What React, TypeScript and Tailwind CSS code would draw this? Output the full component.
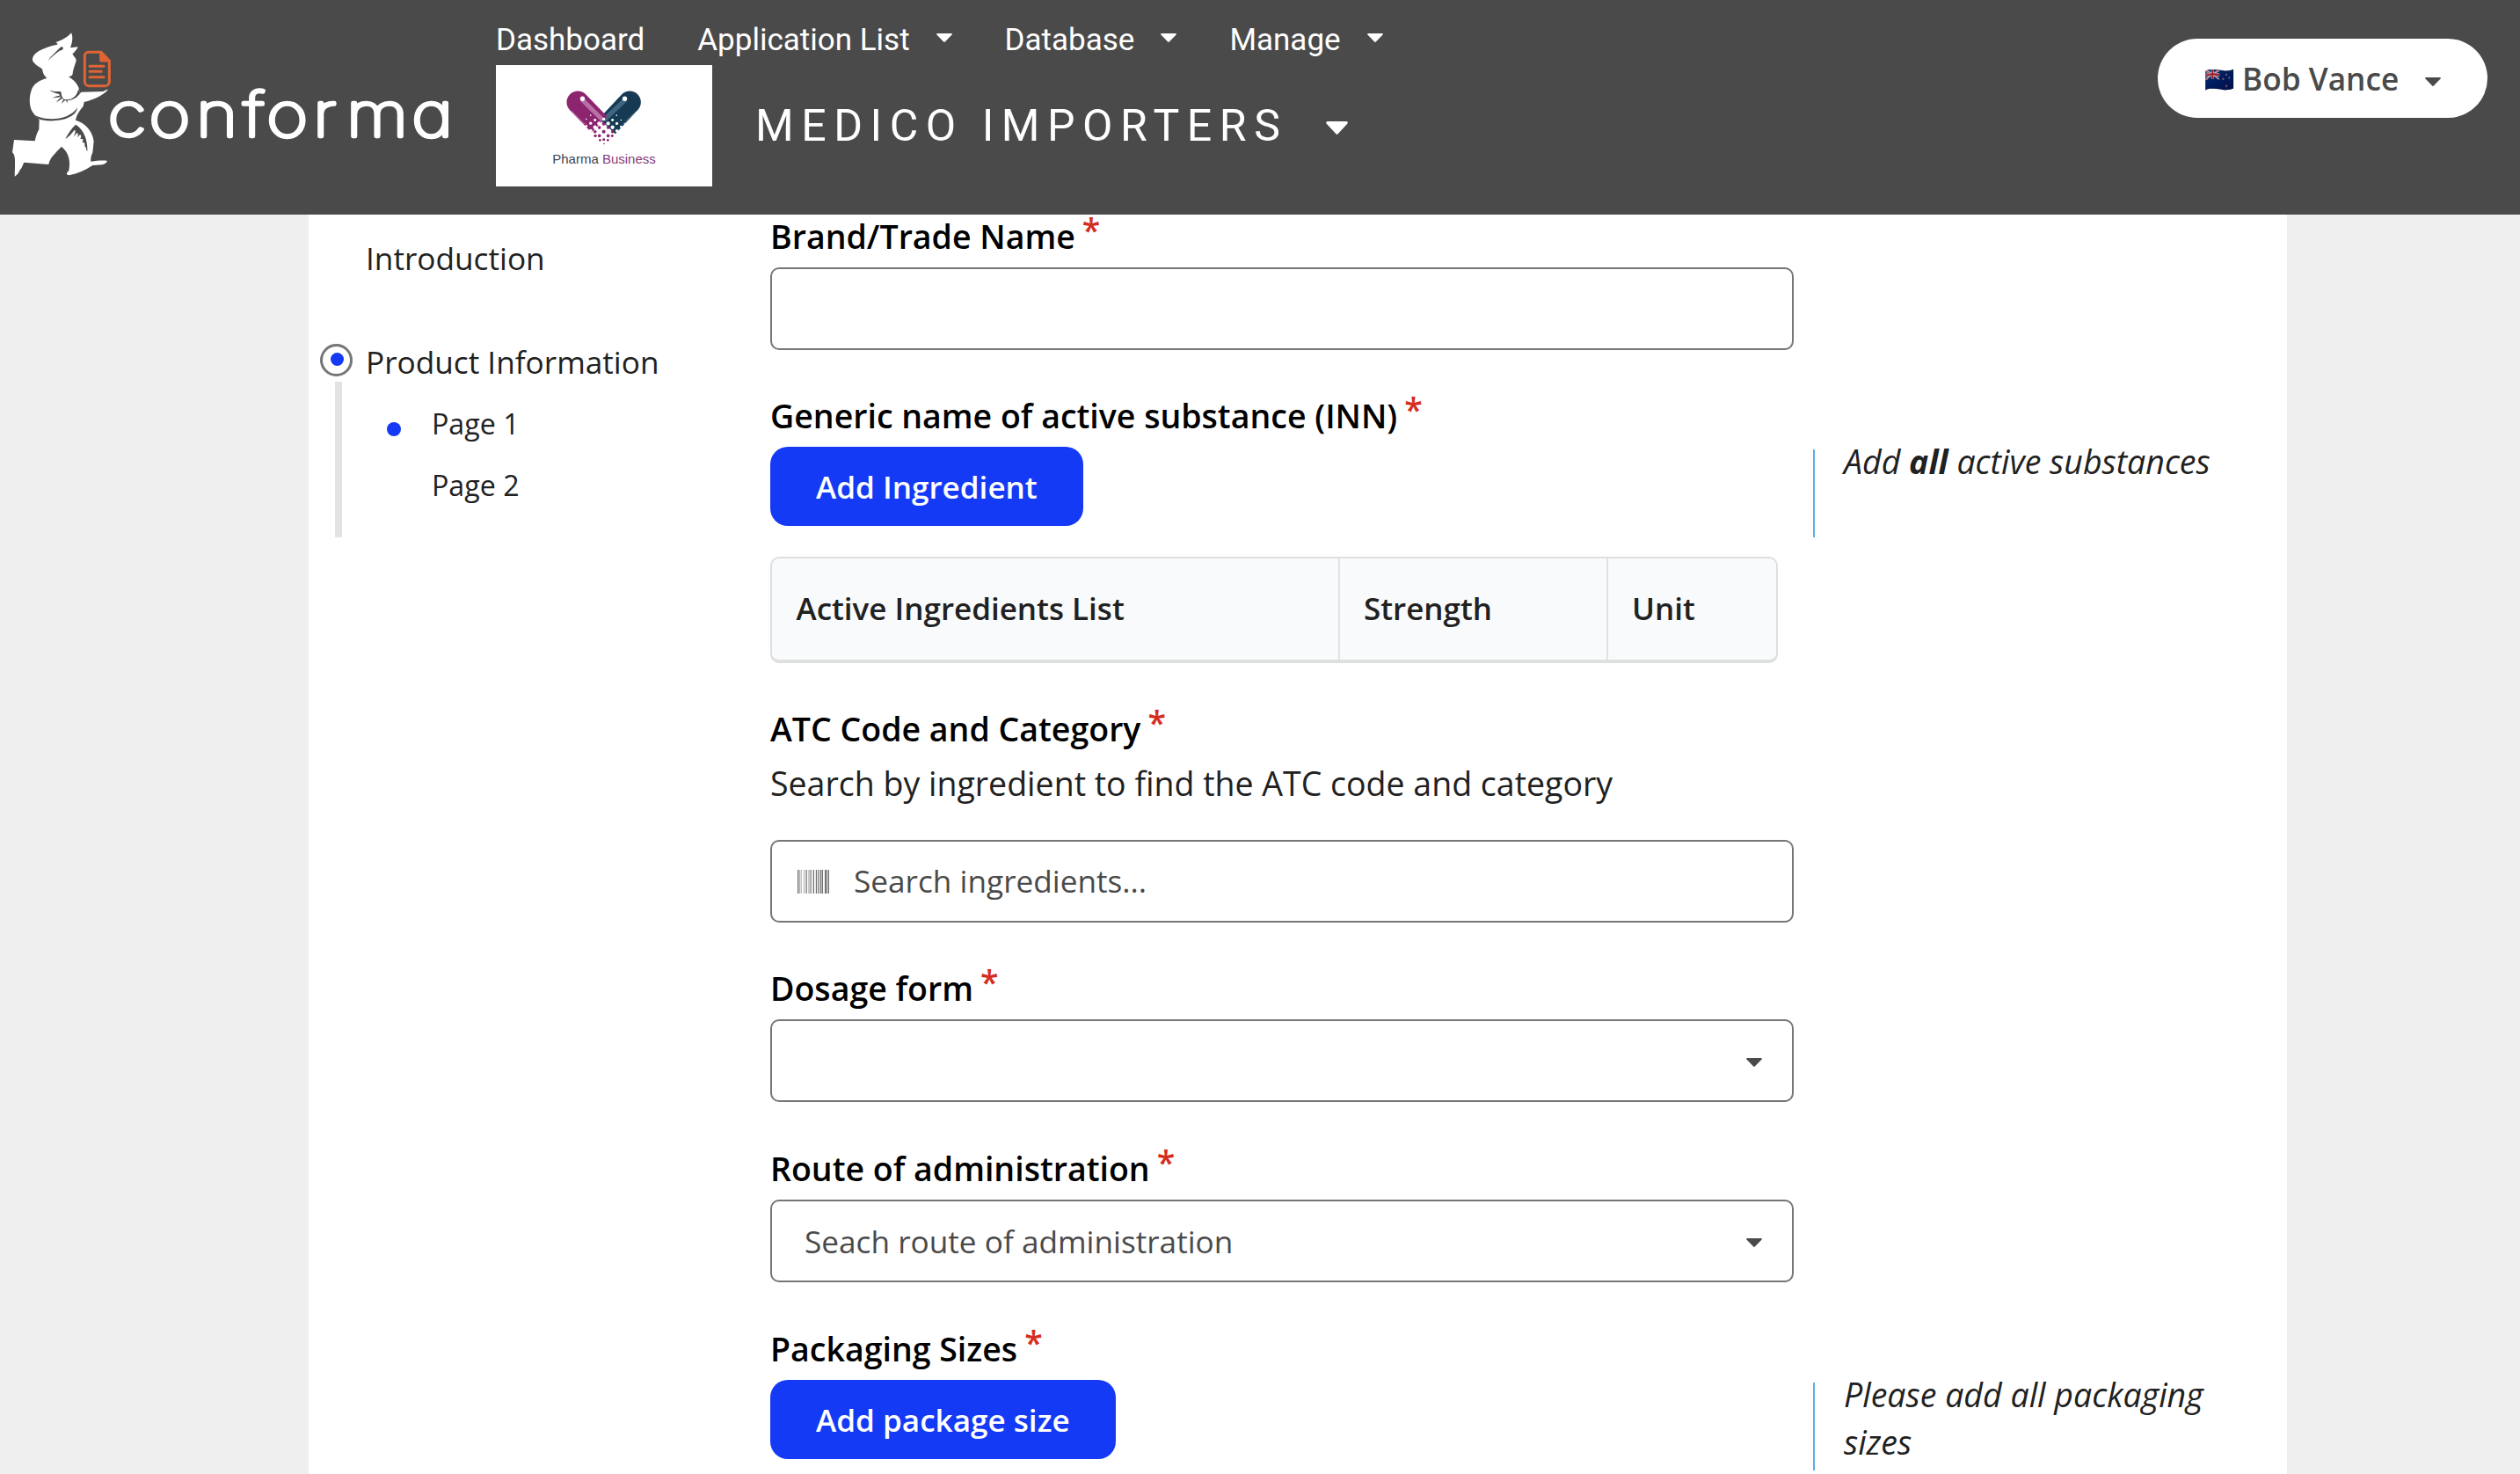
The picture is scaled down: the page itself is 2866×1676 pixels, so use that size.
import React from 'react';

function Caret({ className }: { className: string }) {
  return (
    <svg viewBox="0 0 18 10" className={className} fill="currentColor" preserveAspectRatio="none">
      <path d="M1.2 0H16.8c.9 0 1.4 1 .8 1.6L9.8 9.5c-.4.5-1.2.5-1.6 0L.4 1.6C-.2 1 .3 0 1.2 0z" />
    </svg>
  );
}

function RunnerLogo() {
  return (
    <svg viewBox="0 0 390 540" className="mt-[30px] ml-[10px] h-[180px] w-[130px] shrink-0">
      <path
        fill="#fff"
        d="M213 22C206 32 190 44 160 55C166 58 168 60 165 62C138 67 100 80 86 98C78 110 80 118 88 126C98 138 112 140 115 148C115 160 121 168 130 177C106 182 82 198 77 218C70 235 68 270 80 290C87 302 98 312 104 318L103 352C97 360 92 376 89 391L18 387L12 430C20 436 22 450 21 478L20 512C28 508 34 500 38 490C47 480 48 470 52 464L136 471C139 450 155 436 180 410C202 428 212 455 205 492C195 500 196 507 206 508C235 502 262 490 286 474L318 472C330 468 336 464 335 458C320 456 300 458 280 461C279 446 282 440 286 430L290 392C286 358 262 330 228 320C232 300 240 290 254 272L257 258C290 250 325 234 338 216C338 213 330 217 322 222L247 224L242 230L240 215C236 196 220 182 204 172C216 169 218 166 218 160C220 145 225 135 230 116C230 108 218 98 217 94C225 88 234 76 236 70L210 73C217 55 220 35 213 22Z"
      />
      <g fill="#4a4a4a">
        <path d="M133 117C145 100 165 84 178 70C184 68 188 74 184 78C180 84 176 80 172 84C158 94 146 106 133 117Z" />
        <path d="M138 217C155 225 166 221 178 223C180 233 180 243 190 249C180 247 173 240 172 231C160 228 148 225 138 217Z" />
        <path d="M145 244C156 242 166 236 174 236L176 241C166 243 156 244 145 244Z" />
        <path d="M162 259C166 252 172 246 179 242L183 246C176 250 170 254 162 259Z" />
        <path d="M180 264C182 258 184 252 188 248L192 252C187 256 184 260 180 264ZM202 262L194 251L199 250Z" />
        <path d="M188 248C212 256 232 240 238 214L243 228C236 240 218 256 190 252Z" />
        <path d="M88 303C130 324 205 322 234 277C228 325 130 330 100 314Z" />
        <path d="M193 383C203 366 212 350 228 335C256 350 270 390 268 426C262 420 266 412 260 410C258 404 262 400 256 396C250 398 250 392 254 388C252 382 247 386 244 382C250 374 246 372 243 369C238 374 236 378 234 378C238 368 236 362 232 364L222 376C226 364 230 354 224 354C216 362 206 378 193 383Z" />
      </g>
      <g fill="none" stroke="#e06433" strokeWidth="9" strokeLinecap="round" strokeLinejoin="round">
        <path d="M271 88H315L343 117V189a14 14 0 0 1-14 14H273a14 14 0 0 1-14-14V100a12 12 0 0 1 12-12Z" />
        <path d="M276 136H324M276 154H316M276 173H324" />
        <path fill="#e06433" d="M314 92V117H340Z" />
      </g>
    </svg>
  );
}

function Wordmark() {
  return (
    <svg
      viewBox="0 0 394 100"
      className="mt-[81px] -ml-[18px] h-[100px] w-[394px] shrink-0 overflow-visible font-['Inter',sans-serif] text-[68.5px] font-thin [font-feature-settings:'cv11']"
      fill="#fff"
      stroke="#fff"
      strokeWidth="4.4"
      strokeLinejoin="round"
    >
      <text x="0.6 40.3 85.7 131.1 153.7 198.4 230.5 293.5" y="74.3" transform="scale(1.18 1)">
        conforma
      </text>
    </svg>
  );
}

const WHITE_DOTS: [number, number, number][] = [
  [172, 134, 2.5], [187, 121, 2.5], [202, 137, 4.5], [187, 148, 5], [172, 158, 4], [216, 149, 6.5], [202, 162, 6.5],
  [187, 174, 6], [160, 150, 2], [232, 134, 5], [247, 149, 6.5], [262, 137, 4.5], [276, 121, 2.5], [262, 162, 6.5],
  [277, 149, 5], [291, 137, 2.5], [277, 174, 5.5], [291, 160, 4], [304, 150, 2.5], [217, 176, 6],
];
const MAGENTA_DOTS: [number, number, number][] = [
  [232, 150, 6], [217, 163, 5.5], [247, 163, 5.5], [202, 177, 5.5], [232, 177, 6], [262, 177, 5.5],
  [217, 191, 5.5], [247, 191, 5.5], [232, 204, 4.5], [203, 191, 5], [261, 191, 4.5], [219, 206, 4], [246, 206, 4], [233, 218, 2.5],
];

function PharmaLogo() {
  return (
    <div className="flex h-[138px] w-[246px] shrink-0 flex-col items-center bg-white">
      <svg viewBox="98 30 270 196" className="mt-[27px] h-[65px] w-[90px] shrink-0">
        <path fill="#163a54" d="M294 49A38 38 0 0 1 348 103L270 186L216 132Z" />
        <path fill="#3f6580" d="M300 62L312 72L238 143L226 132Z" />
        <path fill="#8d2470" d="M116 103A38 38 0 0 1 170 49L243 124L190 180Z" />
        <path fill="#b672a4" d="M152 72L163 62L234 132L224 143Z" />
        <path fill="#fff" d="M233 148L276 189L233 226L184 184Z" />
        <path stroke="#c795b8" strokeWidth="2.5" d="M122 107L168 152" />
        <path stroke="#5f7f96" strokeWidth="2.5" d="M342 107L298 150" />
        <circle cx="159" cy="64" r="8" fill="#fff" />
        <circle cx="304" cy="64" r="8" fill="#fff" />
        {WHITE_DOTS.map(([x, y, r]) => (
          <circle key={`w${x}-${y}`} cx={x} cy={y} r={r} fill="#fff" />
        ))}
        {MAGENTA_DOTS.map(([x, y, r]) => (
          <circle key={`m${x}-${y}`} cx={x} cy={y} r={r} fill="#8d2470" />
        ))}
      </svg>
      <div className="mt-[5px] font-['Liberation_Sans',Arial,sans-serif] text-[15px] leading-[20px] whitespace-nowrap text-[#3e4450]">
        Pharma <span className="text-[#8a3a78]">Business</span>
      </div>
    </div>
  );
}

function NavItem({ label, caret = true }: { label: string; caret?: boolean }) {
  return (
    <div className="flex">
      <span>{label}</span>
      {caret && <Caret className="mt-[12px] ml-[30px] h-[10px] w-[18px]" />}
    </div>
  );
}

function Header() {
  return (
    <header className="flex h-[244px] shrink-0 items-start bg-[#4a4a4a] text-white">
      <RunnerLogo />
      <Wordmark />
      <div className="mt-[26px] ml-[48px] font-['Roboto',sans-serif]">
        <nav className="flex h-[40px] gap-[60px] text-[35px] leading-[40px] whitespace-nowrap">
          <NavItem label="Dashboard" caret={false} />
          <NavItem label="Application List" />
          <NavItem label="Database" />
          <NavItem label="Manage" />
        </nav>
        <div className="mt-[8px] flex items-start">
          <PharmaLogo />
          <div className="mt-[39px] ml-[49px] flex text-[50px] leading-[60px] tracking-[8.55px] whitespace-nowrap">
            MEDICO IMPORTERS
            <Caret className="mt-[25px] ml-[44px] h-[15px] w-[25px]" />
          </div>
        </div>
      </div>
      <button className="mt-[44px] mr-[37px] ml-auto flex h-[90px] w-[375px] items-start rounded-full bg-white pl-[53px] font-['Open_Sans',sans-serif] text-[35.2px] leading-[40px] font-semibold text-[#4a4a4a]">
        <span className="mt-[25px] w-[43px] text-left text-[27.6px] leading-[40px] whitespace-nowrap brightness-75">🇳🇿</span>
        <span className="mt-[25px] whitespace-nowrap">Bob Vance</span>
        <Caret className="mt-[44px] ml-[30px] h-[10px] w-[18px]" />
      </button>
    </header>
  );
}

function PageLink({ label, active = false }: { label: string; active?: boolean }) {
  return (
    <div className="flex h-[40px] items-start text-[32.2px] leading-[40px]">
      <span className={active ? 'mt-[18px] h-[16px] w-[16px] rounded-full bg-[#153af5]' : 'h-[16px] w-[16px]'} />
      <span className="ml-[35px]">{label}</span>
    </div>
  );
}

function Sidebar() {
  return (
    <aside className="w-[525px] shrink-0 pt-[29px] text-[35.2px] leading-[40px]">
      <div className="pl-[65px]">Introduction</div>
      <div className="mt-[78px] flex items-start pl-[13px]">
        <div className="flex h-[37px] w-[37px] items-start justify-center rounded-full border-[3px] border-[#767676] pt-[7px] pl-px">
          <div className="h-[15px] w-[15px] rounded-full bg-[#153af5]" />
        </div>
        <div className="ml-[15px]">Product Information</div>
      </div>
      <div className="mt-[3px] flex pl-[30px]">
        <div className="h-[177px] w-[8px] bg-[#e3e3e3]" />
        <div className="ml-[51px] flex flex-col gap-[30px] pt-[28px]">
          <PageLink label="Page 1" active />
          <PageLink label="Page 2" />
        </div>
      </div>
    </aside>
  );
}

function Question({
  label,
  help,
  className = '',
  children,
}: {
  label: string;
  help?: React.ReactNode;
  className?: string;
  children: React.ReactNode;
}) {
  return (
    <section className={`flex items-start ${className}`}>
      <div className="w-[1164px] shrink-0">
        <div className="flex h-[39px] text-[37.5px] leading-[40px] font-semibold whitespace-nowrap text-black">
          {label}
          <span className="-mt-[7px] ml-[8px] text-[#d42d1f]">*</span>
        </div>
        {children}
      </div>
      {help && (
        <div className="mt-[58px] ml-[22px] h-[100px] w-[490px] border-l-2 border-[#5dade2] pl-[33px]">
          <p className="-mt-[13px] text-[37.5px] leading-[54px] italic">{help}</p>
        </div>
      )}
    </section>
  );
}

const fieldBox = 'flex h-[94px] w-full items-start rounded-[10px] border-2 border-[#767676] bg-white text-[35.2px] leading-[40px] text-[#4a4a4a]';

function AddButton({ label }: { label: string }) {
  return (
    <button className="mt-[16px] block h-[90px] rounded-[20px] bg-[#153af5] px-[52px] text-[35.1px] leading-[40px] font-semibold whitespace-nowrap text-white">
      {label}
    </button>
  );
}

function BarcodeIcon() {
  return (
    <svg viewBox="0 64 512 384" className="mt-[32px] ml-[29px] h-[27px] w-[36px] opacity-80" fill="currentColor">
      <path d="M0 448V64h18v384H0zm26.857-.273V64H36v383.727h-9.143zm27.143 0V64h8.857v383.727H54zm44.857 0V64h8.857v383.727h-8.857zm36 0V64h17.714v383.727h-17.714zm44.857 0V64h8.857v383.727h-8.857zm18 0V64h8.857v383.727h-8.857zm18 0V64h8.857v383.727h-8.857zm35.715 0V64h18v383.727h-18zm44.857 0V64h18v383.727h-18zm35.999 0V64h18.001v383.727h-18.001zm36.001 0V64h18.001v383.727h-18.001zm26.857 0V64h18v383.727h-18zm45.143 0V64h26.857v383.727h-26.857zm35.714 0V64h9.143v383.727H476zm18 .273V64h18v384h-18z" />
    </svg>
  );
}

function IngredientsTable() {
  return (
    <div className="mt-[35px] flex h-[121px] w-[1146px] overflow-hidden rounded-[10px] border-2 border-b-4 border-[#dedfdf] bg-[#f9fafb] text-[35px] leading-[40px] font-semibold">
      <div className="w-[646px] border-r-2 border-[#e1e2e3] pt-[37px] pl-[27.5px]">Active Ingredients List</div>
      <div className="w-[305px] border-r-2 border-[#e1e2e3] pt-[37px] pl-[27px]">Strength</div>
      <div className="pt-[37px] pl-[27px]">Unit</div>
    </div>
  );
}

export default function App() {
  return (
    <div className="flex h-[1676px] w-[2866px] flex-col overflow-hidden bg-[#efefef] font-['Open_Sans',sans-serif] text-[#212121]">
      <Header />
      <main className="ml-[351px] flex h-[1432px] w-[2250px] bg-white">
        <Sidebar />
        <div className="pt-[5px]">
          <Question label="Brand/Trade Name">
            <div className={`mt-[16px] ${fieldBox}`} />
          </Question>
          <Question label="Generic name of active substance (INN)" className="mt-[55px]" help={<>Add <strong>all</strong> active substances</>}>
            <AddButton label="Add Ingredient" />
            <IngredientsTable />
          </Question>
          <Question label="ATC Code and Category" className="mt-[55px]">
            <div className="mt-[23px] text-[37.5px] leading-[40px] whitespace-nowrap">
              Search by ingredient to find the ATC code and category
            </div>
            <div className={`mt-[44px] ${fieldBox}`}>
              <BarcodeIcon />
              <span className="mt-[24px] ml-[28px]">Search ingredients...</span>
            </div>
          </Question>
          <Question label="Dosage form" className="mt-[55px]">
            <div className={`mt-[16px] ${fieldBox}`}>
              <Caret className="mt-[42px] mr-[34px] ml-auto h-[10px] w-[18px]" />
            </div>
          </Question>
          <Question label="Route of administration" className="mt-[56px]">
            <div className={`mt-[16px] ${fieldBox}`}>
              <span className="mt-[25px] ml-[37px]">Seach route of administration</span>
              <Caret className="mt-[42px] mr-[34px] ml-auto h-[10px] w-[18px]" />
            </div>
          </Question>
          <Question label="Packaging Sizes" className="mt-[56px]" help="Please add all packaging sizes">
            <AddButton label="Add package size" />
          </Question>
        </div>
      </main>
    </div>
  );
}
